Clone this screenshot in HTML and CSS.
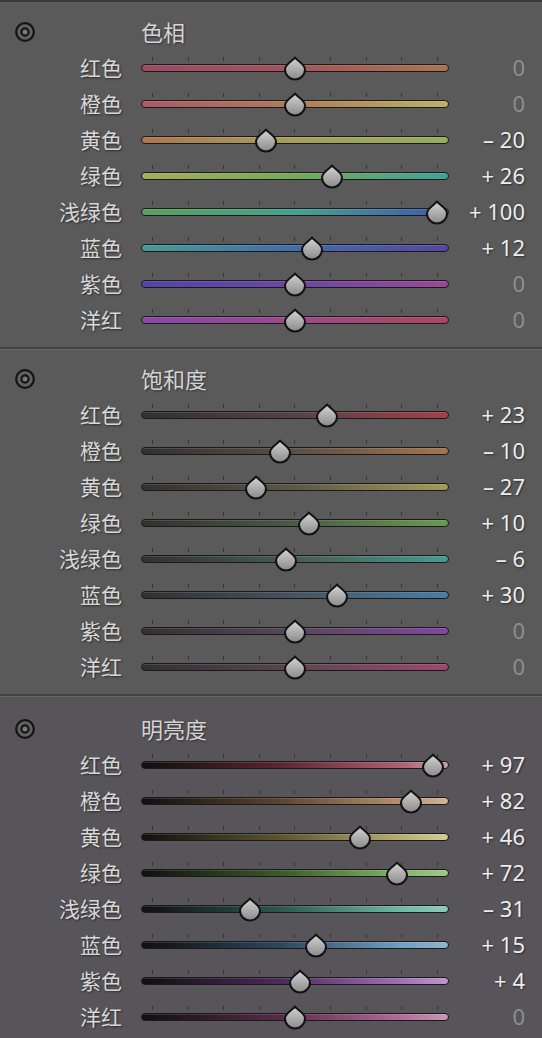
FILE: index.html
```html
<!DOCTYPE html>
<html lang="zh-CN">
<head>
    <meta charset="UTF-8">
    <meta name="viewport" content="width=device-width, initial-scale=1.0">
    <title>HSL</title>
    <link rel="stylesheet" href="styles.css">
</head>
<body>
    <svg class="defs" width="0" height="0">
        <defs>
            <linearGradient id="knob-fill" x1="0" y1="0" x2="0" y2="1">
                <stop offset="0" stop-color="#d4d4d4"/>
                <stop offset="1" stop-color="#8a8a8a"/>
            </linearGradient>
            <symbol id="drop" viewBox="0 0 24 25">
                <path d="M12 1.5 C13.5 4.5 22 8 22 13.5 A10 10 0 0 1 2 13.5 C2 8 10.5 4.5 12 1.5 Z" fill="url(#knob-fill)" stroke="#121212" stroke-width="2" stroke-linejoin="round"/>
            </symbol>
            <symbol id="target" viewBox="0 0 20 20">
                <circle cx="10" cy="10" r="8.8" fill="#616161" stroke="#141414" stroke-width="2.2"/>
                <circle cx="10" cy="10" r="3.6" fill="#7a7a7a" stroke="#141414" stroke-width="2.2"/>
            </symbol>
        </defs>
    </svg>

    <div class="panel">
        <!-- 色相 -->
        <section class="group hue">
            <div class="head"><svg class="target"><use href="#target"/></svg><h2>色相</h2></div>
            <div class="row"><span class="label">红色</span><div class="slider"><div class="track red"></div><svg class="thumb" style="--v:0"><use href="#drop"/></svg></div><span class="value zero">0</span></div>
            <div class="row"><span class="label">橙色</span><div class="slider"><div class="track orange"></div><svg class="thumb" style="--v:0"><use href="#drop"/></svg></div><span class="value zero">0</span></div>
            <div class="row"><span class="label">黄色</span><div class="slider"><div class="track yellow"></div><svg class="thumb" style="--v:-20"><use href="#drop"/></svg></div><span class="value">– 20</span></div>
            <div class="row"><span class="label">绿色</span><div class="slider"><div class="track green"></div><svg class="thumb" style="--v:26"><use href="#drop"/></svg></div><span class="value">+ 26</span></div>
            <div class="row"><span class="label">浅绿色</span><div class="slider"><div class="track aqua"></div><svg class="thumb" style="--v:100"><use href="#drop"/></svg></div><span class="value">+ 100</span></div>
            <div class="row"><span class="label">蓝色</span><div class="slider"><div class="track blue"></div><svg class="thumb" style="--v:12"><use href="#drop"/></svg></div><span class="value">+ 12</span></div>
            <div class="row"><span class="label">紫色</span><div class="slider"><div class="track purple"></div><svg class="thumb" style="--v:0"><use href="#drop"/></svg></div><span class="value zero">0</span></div>
            <div class="row"><span class="label">洋红</span><div class="slider"><div class="track magenta"></div><svg class="thumb" style="--v:0"><use href="#drop"/></svg></div><span class="value zero">0</span></div>
        </section>

        <!-- 饱和度 -->
        <section class="group sat">
            <div class="head"><svg class="target"><use href="#target"/></svg><h2>饱和度</h2></div>
            <div class="row"><span class="label">红色</span><div class="slider"><div class="track red"></div><svg class="thumb" style="--v:23"><use href="#drop"/></svg></div><span class="value">+ 23</span></div>
            <div class="row"><span class="label">橙色</span><div class="slider"><div class="track orange"></div><svg class="thumb" style="--v:-10"><use href="#drop"/></svg></div><span class="value">– 10</span></div>
            <div class="row"><span class="label">黄色</span><div class="slider"><div class="track yellow"></div><svg class="thumb" style="--v:-27"><use href="#drop"/></svg></div><span class="value">– 27</span></div>
            <div class="row"><span class="label">绿色</span><div class="slider"><div class="track green"></div><svg class="thumb" style="--v:10"><use href="#drop"/></svg></div><span class="value">+ 10</span></div>
            <div class="row"><span class="label">浅绿色</span><div class="slider"><div class="track aqua"></div><svg class="thumb" style="--v:-6"><use href="#drop"/></svg></div><span class="value">– 6</span></div>
            <div class="row"><span class="label">蓝色</span><div class="slider"><div class="track blue"></div><svg class="thumb" style="--v:30"><use href="#drop"/></svg></div><span class="value">+ 30</span></div>
            <div class="row"><span class="label">紫色</span><div class="slider"><div class="track purple"></div><svg class="thumb" style="--v:0"><use href="#drop"/></svg></div><span class="value zero">0</span></div>
            <div class="row"><span class="label">洋红</span><div class="slider"><div class="track magenta"></div><svg class="thumb" style="--v:0"><use href="#drop"/></svg></div><span class="value zero">0</span></div>
        </section>

        <!-- 明亮度 -->
        <section class="group lum">
            <div class="head"><svg class="target"><use href="#target"/></svg><h2>明亮度</h2></div>
            <div class="row"><span class="label">红色</span><div class="slider"><div class="track red"></div><svg class="thumb" style="--v:97"><use href="#drop"/></svg></div><span class="value">+ 97</span></div>
            <div class="row"><span class="label">橙色</span><div class="slider"><div class="track orange"></div><svg class="thumb" style="--v:82"><use href="#drop"/></svg></div><span class="value">+ 82</span></div>
            <div class="row"><span class="label">黄色</span><div class="slider"><div class="track yellow"></div><svg class="thumb" style="--v:46"><use href="#drop"/></svg></div><span class="value">+ 46</span></div>
            <div class="row"><span class="label">绿色</span><div class="slider"><div class="track green"></div><svg class="thumb" style="--v:72"><use href="#drop"/></svg></div><span class="value">+ 72</span></div>
            <div class="row"><span class="label">浅绿色</span><div class="slider"><div class="track aqua"></div><svg class="thumb" style="--v:-31"><use href="#drop"/></svg></div><span class="value">– 31</span></div>
            <div class="row"><span class="label">蓝色</span><div class="slider"><div class="track blue"></div><svg class="thumb" style="--v:15"><use href="#drop"/></svg></div><span class="value">+ 15</span></div>
            <div class="row"><span class="label">紫色</span><div class="slider"><div class="track purple"></div><svg class="thumb" style="--v:4"><use href="#drop"/></svg></div><span class="value">+ 4</span></div>
            <div class="row"><span class="label">洋红</span><div class="slider"><div class="track magenta"></div><svg class="thumb" style="--v:0"><use href="#drop"/></svg></div><span class="value zero">0</span></div>
        </section>
    </div>
</body>
</html>
```

FILE: styles.css
```css
body{
    margin: 0;
    background-color: #5a5a5a;
    font-family: "Noto Sans CJK SC", "Noto Sans", sans-serif;
}
.defs{
    position: absolute;
    width: 0;
    height: 0;
}
.panel{
    border-top: 2px solid #3a3a3a;
}
.group{
    padding: 12px 0 9px;
}
.group + .group{
    border-top: 2px solid #424242;
    box-shadow: inset 0 1px 0 #676767;
}
.group.lum{
    padding-top: 15px;
    background-color: #58555a;
}
.head, .row{
    display: grid;
    grid-template-columns: 122px 308px 1fr;
    column-gap: 19px;
    align-items: center;
    height: 36px;
    padding-right: 17px;
}
.target{
    width: 20px;
    height: 20px;
    margin-left: 15px;
}
.head h2{
    margin: -3px 0 0;
    font-size: 22px;
    font-weight: 400;
    color: #d4d4d4;
    line-height: 36px;
    text-shadow: 1px 1px 2px rgba(0, 0, 0, 0.45);
}
.label{
    margin-top: -3px;
    text-align: right;
    font-size: 21px;
    line-height: 36px;
    color: #d8d8d8;
    text-shadow: 1px 1px 2px rgba(0, 0, 0, 0.55);
}
.value{
    margin-top: -2px;
    text-align: right;
    font-family: "Noto Sans", sans-serif;
    font-size: 22px;
    line-height: 36px;
    color: #ececec;
    white-space: nowrap;
    text-shadow: 1px 1px 2px rgba(0, 0, 0, 0.5);
}
.value.zero{
    color: #8e8e8e;
    text-shadow: none;
}
.slider{
    position: relative;
    height: 36px;
    display: flex;
    align-items: center;
}
.track{
    position: relative;
    width: 100%;
    height: 8px;
    box-sizing: border-box;
    border: 1.5px solid #1d1919;
    border-radius: 4px;
    box-shadow: inset 0 1px 0 rgba(255, 255, 255, 0.12);
}
.track::before{
    content: "";
    position: absolute;
    left: 9.5px;
    top: -8px;
    width: 287px;
    height: 4px;
    background: repeating-linear-gradient(to right, rgba(25, 25, 25, 0.55) 0 1px, transparent 1px 35.625px);
}
.thumb{
    position: absolute;
    top: 5.5px;
    left: calc((var(--v) + 100) * 1.425px - 1px);
    width: 24px;
    height: 25px;
}

/* hue */
.hue .red{ background: linear-gradient(to right, #9c4a66, #a4545a 50%, #a87650); }
.hue .orange{ background: linear-gradient(to right, #ac5868, #b07c58 50%, #bab266); }
.hue .yellow{ background: linear-gradient(to right, #ac7650, #a4a05a 50%, #94ae5a); }
.hue .green{ background: linear-gradient(to right, #a4ae58, #74aa5a 50%, #3ea29a); }
.hue .aqua{ background: linear-gradient(to right, #58a25c, #46a290 50%, #3c58ae); }
.hue .blue{ background: linear-gradient(to right, #469c96, #426cac 50%, #5446a4); }
.hue .purple{ background: linear-gradient(to right, #4e46a8, #6c46a6 50%, #9a4896); }
.hue .magenta{ background: linear-gradient(to right, #8648ac, #9c488c 50%, #aa485e); }

/* saturation */
.sat .red{ background: linear-gradient(to right, #323030, #564246 50%, #a4404a); }
.sat .orange{ background: linear-gradient(to right, #323030, #5a4e46 50%, #a47650); }
.sat .yellow{ background: linear-gradient(to right, #323230, #5a5846 50%, #a49c58); }
.sat .green{ background: linear-gradient(to right, #303230, #4c5a46 50%, #689c50); }
.sat .aqua{ background: linear-gradient(to right, #303232, #465c58 50%, #469c8e); }
.sat .blue{ background: linear-gradient(to right, #303032, #465460 50%, #487ea6); }
.sat .purple{ background: linear-gradient(to right, #323032, #56485c 50%, #8246a0); }
.sat .magenta{ background: linear-gradient(to right, #323032, #5a4652 50%, #a04674); }

/* luminance */
.lum .red{ background: linear-gradient(to right, #101010, #5a2630 45%, #b06070 85%, #c8a0a8); }
.lum .orange{ background: linear-gradient(to right, #101010, #5a4430 45%, #b89070 85%, #d0b498); }
.lum .yellow{ background: linear-gradient(to right, #101010, #5a5430 45%, #b8b070 85%, #d2cc96); }
.lum .green{ background: linear-gradient(to right, #101010, #3a5a28 45%, #80b868 85%, #a0c888); }
.lum .aqua{ background: linear-gradient(to right, #101010, #2c5650 45%, #70b8a8 85%, #90c8bc); }
.lum .blue{ background: linear-gradient(to right, #101010, #2c4660 45%, #70a0c4 85%, #90b4cc); }
.lum .purple{ background: linear-gradient(to right, #101010, #4a2a5a 45%, #a070b8 85%, #bc98c8); }
.lum .magenta{ background: linear-gradient(to right, #101010, #5a2a48 45%, #b46c98 85%, #c898b4); }
```
